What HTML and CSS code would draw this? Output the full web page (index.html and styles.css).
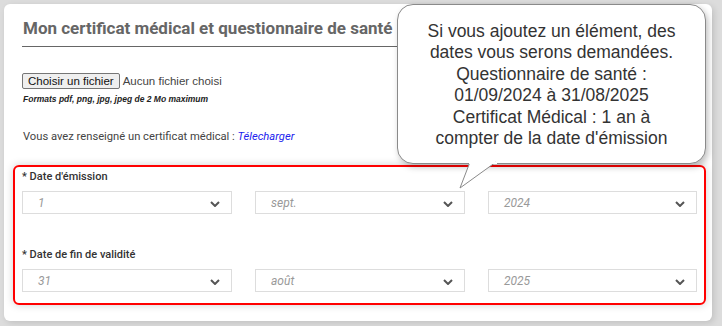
FILE: index.html
```html
<!DOCTYPE html>
<html lang="fr">
<head>
    <meta charset="UTF-8" />
    <title>Mon certificat médical</title>
    <link rel="stylesheet" href="styles.css">
</head>
<body>
<main class="card">
    <h2 class="title">Mon certificat médical et questionnaire de santé</h2>

    <div class="upload">
        <div class="file-row">
            <button class="file-btn">Choisir un fichier</button>
            <span class="file-name">Aucun fichier choisi</span>
        </div>
        <p class="formats">Formats pdf, png, jpg, jpeg de 2 Mo maximum</p>
    </div>

    <p class="info">Vous avez renseigné un certificat médical : <a href="#">Télecharger</a></p>

    <section class="dates">
        <div class="field">
            <label>* Date d'émission</label>
            <div class="selects">
                <div class="select"><span>1</span><svg viewBox="0 0 10 6"><path d="M1 1l4 4 4-4" /></svg></div>
                <div class="select"><span>sept.</span><svg viewBox="0 0 10 6"><path d="M1 1l4 4 4-4" /></svg></div>
                <div class="select"><span>2024</span><svg viewBox="0 0 10 6"><path d="M1 1l4 4 4-4" /></svg></div>
            </div>
        </div>
        <div class="field">
            <label>* Date de fin de validité</label>
            <div class="selects">
                <div class="select"><span>31</span><svg viewBox="0 0 10 6"><path d="M1 1l4 4 4-4" /></svg></div>
                <div class="select"><span>août</span><svg viewBox="0 0 10 6"><path d="M1 1l4 4 4-4" /></svg></div>
                <div class="select"><span>2025</span><svg viewBox="0 0 10 6"><path d="M1 1l4 4 4-4" /></svg></div>
            </div>
        </div>
    </section>
</main>

<!-- bulle d'aide par-dessus le formulaire -->
<div class="bubble">
    <p>Si vous ajoutez un élément, des<br>dates vous serons demandées.<br>
    Questionnaire de santé :<br>01/09/2024 à 31/08/2025<br>
    Certificat Médical : 1 an à<br>compter de la date d'émission</p>
    <svg class="tail" width="40" height="28" viewBox="0 0 40 28">
        <path d="M10 0 L0 26 L36 0" fill="#fff" stroke="#8a8a8a" stroke-width="1" />
        <rect x="9" y="0" width="28" height="2" fill="#fff" />
    </svg>
</div>
</body>
</html>
```

FILE: styles.css
```css
* {
    box-sizing: border-box;
}
body {
    margin: 0;
    padding: 4px 10px 5px 4px;
    background-color: #dcdcdc;
    font-family: Roboto, "Liberation Sans", Arial, sans-serif;
    height: 326px;
    overflow: hidden;
}
.card {
    background-color: #fff;
    border-radius: 6px;
    padding: 12px 6px 17px 9px;
    height: 317px;
    box-shadow: 2px 2px 6px rgba(0, 0, 0, 0.12);
}
.title {
    margin: 0 0 0 9px;
    padding: 2px 0 8px 1px;
    font-size: 17px;
    font-weight: bold;
    color: #666;
    border-bottom: 1px solid #666;
}
.upload {
    margin: 26px 0 0 9px;
}
.file-row {
    display: flex;
    align-items: center;
    gap: 3px;
}
.file-btn {
    font-family: "Liberation Sans", Arial, sans-serif;
    font-size: 11.5px;
    color: #111;
    background-color: #efefef;
    border: 1px solid #767676;
    border-radius: 2px;
    padding: 0 5px;
    height: 16px;
    line-height: 14px;
}
.file-name {
    font-family: "Liberation Sans", Arial, sans-serif;
    font-size: 11.5px;
    color: #444;
}
.formats {
    margin: 5px 0 0 1px;
    font-family: "Liberation Sans", Arial, sans-serif;
    font-size: 8.5px;
    font-style: italic;
    font-weight: bold;
    color: #222;
}
.info {
    margin: 26px 0 0 10px;
    font-size: 11.2px;
    color: #444;
}
.info a {
    color: #2222ee;
    font-style: italic;
    text-decoration: none;
}
.dates {
    margin-top: 22px;
    border: 2px solid #f00;
    border-radius: 6px;
    padding: 3px 7px 11px 7px;
    box-shadow: 0 0 8px rgba(0, 0, 0, 0.18);
    display: flex;
    flex-direction: column;
    gap: 34px;
}
.field label {
    display: block;
    font-size: 11px;
    font-weight: 500;
    color: #333;
    margin-bottom: 8px;
}
.selects {
    display: grid;
    grid-template-columns: 210px 210px 1fr;
    gap: 23px;
}
.select {
    position: relative;
    height: 23px;
    border: 1px solid #ddd;
    display: flex;
    align-items: center;
    padding-left: 15px;
    font-size: 12px;
    font-style: italic;
    color: #999;
}
.select svg {
    position: absolute;
    right: 11px;
    top: 9px;
    width: 10px;
    height: 6px;
    fill: none;
    stroke: #555;
    stroke-width: 2;
}
.bubble {
    position: absolute;
    left: 397px;
    top: 4px;
    width: 309px;
    height: 160px;
    background-color: #fff;
    border: 1px solid #8a8a8a;
    border-radius: 16px;
    box-shadow: 2px 3px 6px rgba(0, 0, 0, 0.25);
    display: flex;
    align-items: center;
    justify-content: center;
    padding: 2px 10px 0;
}
.bubble p {
    margin: 0;
    text-align: center;
    font-family: "Liberation Sans", Arial, sans-serif;
    font-size: 17.5px;
    line-height: 21.5px;
    color: #333;
}
.tail {
    position: absolute;
    left: 62px;
    top: 157px;
    overflow: visible;
}
```
